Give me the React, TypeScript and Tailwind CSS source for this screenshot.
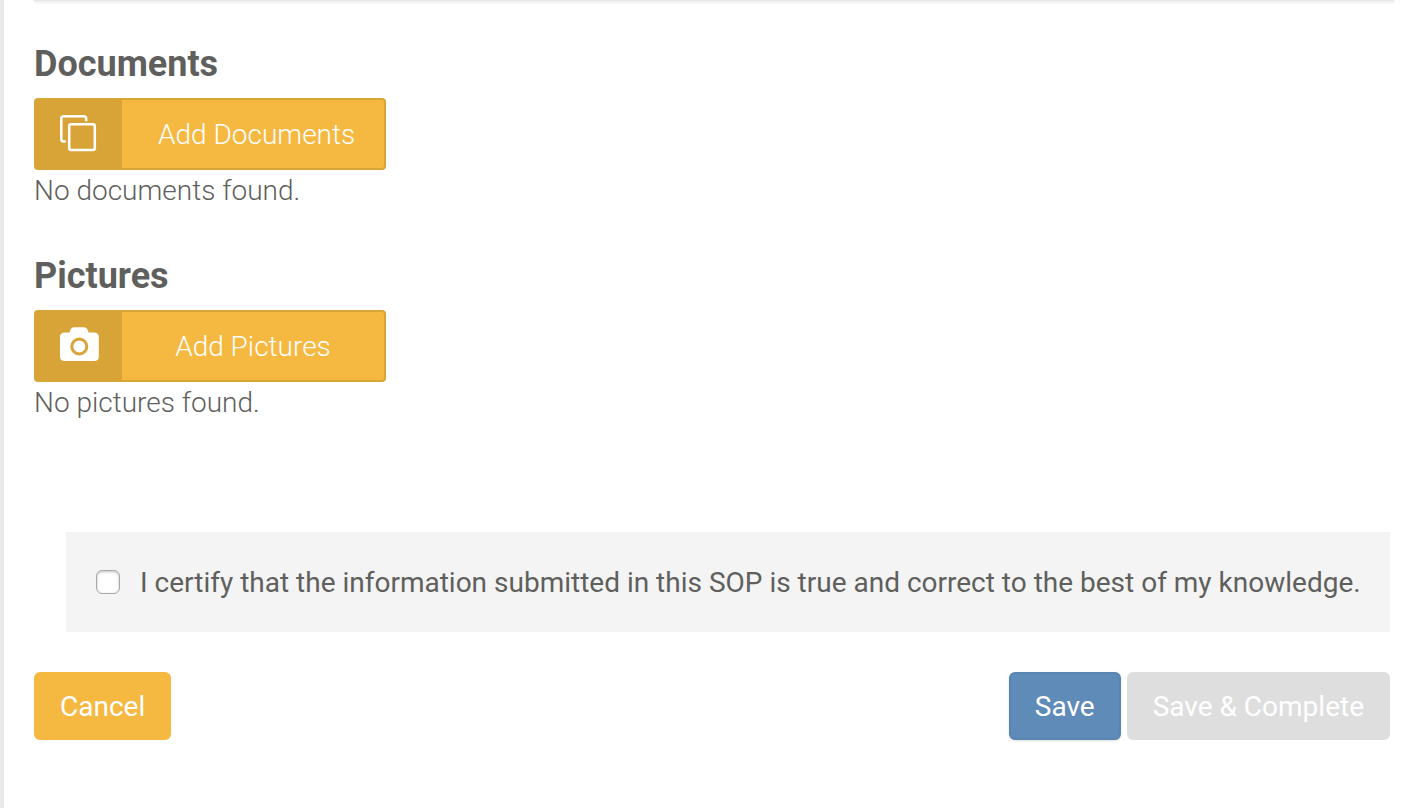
import { useState } from "react";
import type { ReactNode } from "react";

function CopyIcon() {
  return (
    <svg className="w-10 h-10" viewBox="0 0 40 40" fill="none" aria-hidden="true">
      <path
        d="M27.2 7.3V4.5A2.2 2.2 0 0 0 25 2.3H4.5A2.2 2.2 0 0 0 2.3 4.5V25.2A2.2 2.2 0 0 0 4.5 27.4H6.7"
        stroke="white"
        strokeWidth="2.5"
      />
      <rect x="10.2" y="10.3" width="25.6" height="25.6" rx="2" stroke="white" strokeWidth="2.5" />
    </svg>
  );
}

function CameraIcon() {
  return (
    <svg className="w-10 h-10" viewBox="0 0 40 40" fill="none" aria-hidden="true">
      <path
        d="M6 6.5H10.5L11.2 4.4Q12.2 1.2 15.5 1.2H24.5Q27.8 1.2 28.8 4.4L29.5 6.5H35Q39.8 6.5 39.8 11V30.5Q39.8 35 35 35H6Q1 35 1 30.5V11Q1 6.5 6 6.5Z"
        fill="white"
      />
      <circle cx="20.3" cy="20.5" r="7.5" stroke="#d9a437" strokeWidth="3" />
    </svg>
  );
}

interface AttachmentSectionProps {
  title: string;
  action: string;
  emptyText: string;
  icon: ReactNode;
}

function AttachmentSection({ title, action, emptyText, icon }: AttachmentSectionProps) {
  return (
    <section className="flex flex-col items-start">
      <h2 className="text-[36px] leading-10 font-bold">{title}</h2>
      <button
        type="button"
        className="mt-3.5 flex h-18 w-88 rounded border-2 border-[#d9a437] bg-[#f5b841] font-light text-white"
      >
        <span className="flex h-full w-[86px] items-center justify-center bg-[#d9a437]">
          {icon}
        </span>
        <span className="min-w-0 flex-1 self-center px-9 pt-0.5 text-center whitespace-nowrap">
          {action}
        </span>
      </button>
      <p className="leading-[42px] font-light">{emptyText}</p>
    </section>
  );
}

export default function App() {
  const [certified, setCertified] = useState(false);

  return (
    <main className="min-h-screen border-l-4 border-[#e9e9e9] bg-white pr-6 pl-[30px] font-[Roboto,sans-serif] text-[28px] leading-10 text-[#5f5f5d]">
      <div className="h-px bg-[#e6e6e6] shadow-[0_1px_3px_rgba(0,0,0,0.2)]" />

      <div className="flex flex-col gap-11 pt-[43px] pr-1">
        <AttachmentSection
          title="Documents"
          action="Add Documents"
          emptyText="No documents found."
          icon={<CopyIcon />}
        />
        <AttachmentSection
          title="Pictures"
          action="Add Pictures"
          emptyText="No pictures found."
          icon={<CameraIcon />}
        />
      </div>

      <div className="mt-27 mr-1 ml-8 bg-[#f4f4f4] py-[29px] pr-6 pl-[30px]">
        <label className="flex items-center gap-5">
          <input
            type="checkbox"
            checked={certified}
            onChange={(e) => setCertified(e.target.checked)}
            className="size-6 shrink-0 appearance-none rounded-[6px] border border-[#a9a9a9] bg-white shadow-[inset_0_1px_3px_rgba(0,0,0,0.25)] checked:bg-[#5f8bb8]"
          />
          <span className="pt-0.5">
            I certify that the information submitted in this SOP is true and correct to the best of my knowledge.
          </span>
        </label>
      </div>

      <div className="mt-10 mr-1 flex items-center justify-between text-white">
        <button type="button" className="h-17 rounded-md bg-[#f5b841] px-[26px] pt-0.5">
          Cancel
        </button>
        <div className="flex gap-1.5">
          <button
            type="button"
            className="h-17 rounded-md border-2 border-[#5985b1] bg-[#5f8bb8] px-6 pt-0.5 shadow-sm"
          >
            Save
          </button>
          <button
            type="button"
            disabled={!certified}
            className="h-17 rounded-md bg-[#5f8bb8] px-[26px] pt-0.5 disabled:bg-[#dedede]"
          >
            Save &amp; Complete
          </button>
        </div>
      </div>
    </main>
  );
}
